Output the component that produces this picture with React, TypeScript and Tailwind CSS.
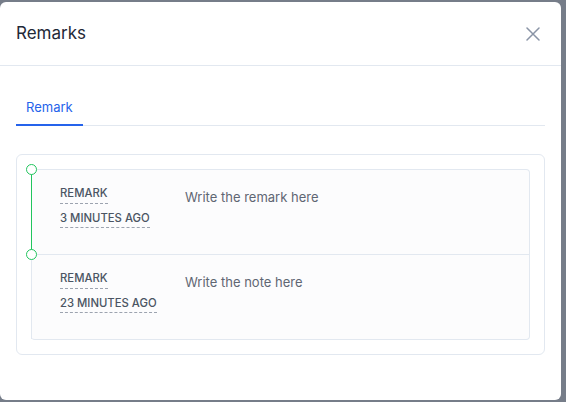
import React from "react";

function Row({ label, time, text, last }: { label: string; time: string; text: string; last?: boolean }) {
  return (
    <div
      className={`relative flex border-l border-[#e2e8f0] pl-[28px] pt-[15px] ${
        last ? "h-[84px]" : "h-[85px] border-b"
      }`}
    >
      {!last && <span className="absolute bottom-[-1px] left-[-1px] top-0 w-px bg-[#22c55e]" />}
      <span className="absolute left-[-6px] top-[-6px] h-[11px] w-[11px] rounded-full border border-[#22c55e] bg-white" />
      <div className="flex w-[125px] flex-col items-start">
        <span className="border-b border-dashed border-[#9ca3af] pb-[2px] text-[11.3px] font-medium leading-[16px] text-[#4b5563]">
          {label}
        </span>
        <span className="mt-[6px] border-b border-dashed border-[#9ca3af] pb-[1px] text-[11.3px] font-medium leading-[16px] text-[#4b5563]">
          {time}
        </span>
      </div>
      <div className="mt-[2px] text-[13px] leading-[20px] text-[#5f6673]">{text}</div>
    </div>
  );
}

export default function App() {
  return (
    <div
      className="flex h-[402px] w-[566px] bg-[#767d89] pb-[2px] pr-[5px] pt-[2px]"
      style={{ fontFamily: "Inter, 'Noto Sans', sans-serif" }}
    >
      <div className="flex flex-1 flex-col rounded-md bg-white">
        <div className="flex h-[64px] items-center justify-between border-b border-[#e2e8f0] pl-4 pr-[21px]">
          <h2 className="text-[17px] text-[#1f2937]">Remarks</h2>
          <svg width="14" height="14" viewBox="0 0 14 14" className="text-[#8a94a6]">
            <path d="M1 1L13 13M13 1L1 13" stroke="currentColor" strokeWidth="1.5" strokeLinecap="round" />
          </svg>
        </div>
        <div className="mx-4 mt-[29px] flex border-b border-[#e2e8f0]">
          <button className="-mb-px border-b-2 border-[#2563eb] px-[10px] pb-[7px] pt-[2px] text-[13px] leading-[20px] text-[#2563eb]">
            Remark
          </button>
        </div>
        <div className="mx-4 mt-[28px] rounded-md border border-[#e2e8f0] p-[14px]">
          <div className="rounded-sm border border-l-0 border-[#e2e8f0] bg-[#fcfcfd]">
            <Row label="REMARK" time="3 MINUTES AGO" text="Write the remark here" />
            <Row label="REMARK" time="23 MINUTES AGO" text="Write the note here" last />
          </div>
        </div>
      </div>
    </div>
  );
}
